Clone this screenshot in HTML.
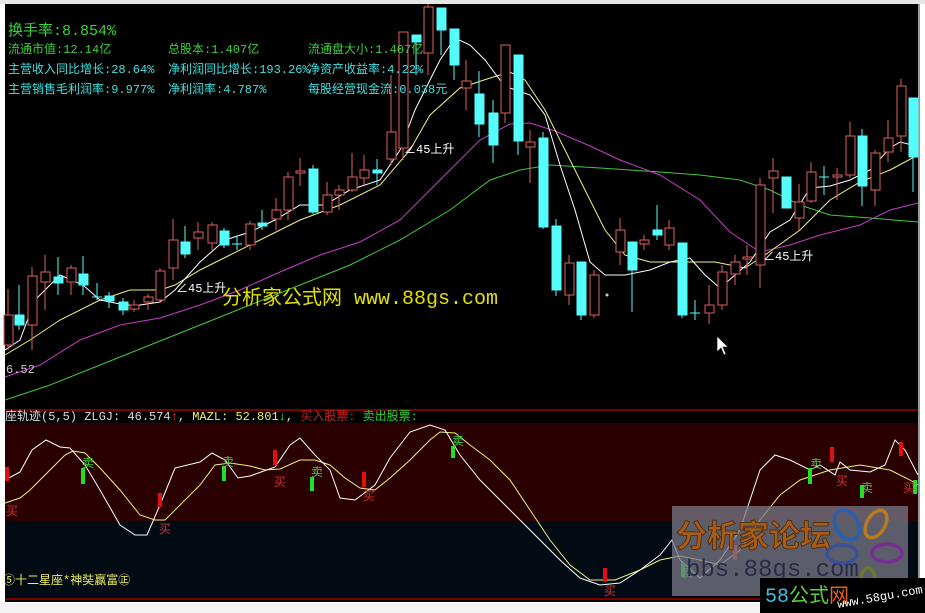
<!DOCTYPE html>
<html><head><meta charset="utf-8"><style>
html,body{margin:0;padding:0;background:#fff;width:925px;height:613px;overflow:hidden}
svg{display:block}
text{font-family:"Liberation Mono","Noto Sans CJK SC",monospace}
</style></head><body>
<svg width="925" height="613" viewBox="0 0 925 613" xmlns="http://www.w3.org/2000/svg">
<rect x="0" y="0" width="925" height="613" fill="#fff"/>
<rect x="0" y="0" width="925" height="4" fill="#e6e6e6"/>
<rect x="5" y="4" width="913" height="598" fill="#000"/>
<rect x="918" y="4" width="2" height="600" fill="#9a9a9a"/>
<rect x="5" y="423" width="913" height="98" fill="#2a0000"/>
<rect x="5" y="521" width="913" height="76" fill="#020a14"/>
<line x1="5" y1="410" x2="918" y2="410" stroke="#a00000" stroke-width="1.5"/>
<line x1="5" y1="599" x2="918" y2="599" stroke="#a00000" stroke-width="1.5"/>
<rect x="0" y="603" width="925" height="10" fill="#f4f4f4"/>

<polyline fill="none" stroke="#3fc83f" stroke-width="1" points="5,400 50,385 100,365 150,345 200,325 250,305 300,285 350,265 400,240 450,210 490,180 520,170 550,165 600,168 660,172 700,175 740,180 770,190 800,205 830,215 870,218 918,222"/>
<polyline fill="none" stroke="#c83cc8" stroke-width="1" points="5,377 40,365 80,340 120,325 160,318 200,305 240,290 280,272 320,255 360,242 400,220 440,180 480,140 510,124 530,123 555,131 590,146 620,160 660,175 700,200 730,232 760,252 790,245 820,235 860,225 890,210 918,203"/>
<polyline fill="none" stroke="#f0f080" stroke-width="1" points="5,355 30,340 60,320 100,300 130,290 160,290 175,285 200,270 230,255 260,240 300,220 340,205 380,185 410,150 430,115 460,88 490,78 510,72 525,80 545,110 565,150 585,190 605,230 625,255 650,262 680,262 715,262 745,268 765,255 800,230 830,200 860,182 890,170 918,155"/>
<polyline fill="none" stroke="#ffffff" stroke-width="1" points="5,350 20,340 35,300 60,275 83,285 100,300 125,305 140,305 160,302 175,290 200,262 225,240 250,232 275,220 300,205 325,205 350,190 380,180 400,150 415,110 440,60 455,38 470,45 485,60 500,80 510,88 530,95 545,115 560,165 575,210 590,262 605,275 625,275 650,270 670,262 690,258 705,275 720,288 735,275 750,262 770,232 790,220 810,188 830,186 850,180 870,170 890,148 900,142 912,145 918,140"/>

<g stroke="#e06060" fill="none" stroke-width="1">
<line x1="8" y1="289" x2="8" y2="350"/><rect x="4" y="315" width="9" height="30" fill="#000"/>
<line x1="32" y1="267" x2="32" y2="350"/><rect x="28" y="276" width="9" height="49" fill="#000"/>
<line x1="45" y1="255" x2="45" y2="310"/><rect x="41" y="272" width="9" height="10" fill="#000"/>
<line x1="71" y1="265" x2="71" y2="295"/><rect x="67" y="268" width="9" height="14" fill="#000"/>
<line x1="134" y1="300" x2="134" y2="312"/><rect x="130" y="305" width="9" height="4" fill="#000"/>
<line x1="148" y1="294" x2="148" y2="310"/><rect x="144" y="297" width="9" height="5" fill="#000"/>
<line x1="160" y1="268" x2="160" y2="303"/><rect x="156" y="271" width="9" height="29" fill="#000"/>
<line x1="173" y1="219" x2="173" y2="280"/><rect x="169" y="240" width="9" height="28" fill="#000"/>
<line x1="198" y1="222" x2="198" y2="250"/><rect x="194" y="232" width="9" height="6" fill="#000"/>
<line x1="212" y1="222" x2="212" y2="250"/><rect x="208" y="225" width="9" height="18" fill="#000"/>
<line x1="250" y1="221" x2="250" y2="250"/><rect x="246" y="224" width="9" height="21" fill="#000"/>
<line x1="276" y1="198" x2="276" y2="230"/><rect x="272" y="210" width="9" height="9" fill="#000"/>
<line x1="288" y1="172" x2="288" y2="220"/><rect x="284" y="177" width="9" height="33" fill="#000"/>
<line x1="300" y1="158" x2="300" y2="186"/><rect x="296" y="171" width="9" height="2" fill="#000"/>
<line x1="327" y1="182" x2="327" y2="215"/><rect x="323" y="195" width="9" height="17" fill="#000"/>
<line x1="339" y1="185" x2="339" y2="210"/><rect x="335" y="190" width="9" height="5" fill="#000"/>
<line x1="352" y1="153" x2="352" y2="192"/><rect x="348" y="177" width="9" height="13" fill="#000"/>
<line x1="364" y1="155" x2="364" y2="185"/><rect x="360" y="170" width="9" height="8" fill="#000"/>
<line x1="391" y1="75" x2="391" y2="165"/><rect x="387" y="132" width="9" height="27" fill="#000"/>
<line x1="403" y1="32" x2="403" y2="160"/><rect x="399" y="32" width="9" height="116" fill="#000"/>
<line x1="428" y1="4" x2="428" y2="75"/><rect x="424" y="7" width="9" height="46" fill="#000"/>
<line x1="466" y1="60" x2="466" y2="110"/><rect x="462" y="81" width="9" height="7" fill="#000"/>
<line x1="505" y1="45" x2="505" y2="123"/><rect x="501" y="45" width="9" height="68" fill="#000"/>
<line x1="530" y1="130" x2="530" y2="183"/><rect x="526" y="142" width="9" height="5" fill="#000"/>
<line x1="569" y1="255" x2="569" y2="305"/><rect x="565" y="263" width="9" height="32" fill="#000"/>
<line x1="594" y1="270" x2="594" y2="318"/><rect x="590" y="275" width="9" height="40" fill="#000"/>
<line x1="620" y1="218" x2="620" y2="265"/><rect x="616" y="230" width="9" height="22" fill="#000"/>
<line x1="644" y1="235" x2="644" y2="250"/><rect x="640" y="240" width="9" height="4" fill="#000"/>
<line x1="669" y1="220" x2="669" y2="250"/><rect x="665" y="228" width="9" height="17" fill="#000"/>
<line x1="709" y1="285" x2="709" y2="324"/><rect x="705" y="305" width="9" height="8" fill="#000"/>
<line x1="722" y1="265" x2="722" y2="310"/><rect x="718" y="272" width="9" height="33" fill="#000"/>
<line x1="735" y1="255" x2="735" y2="285"/><rect x="731" y="262" width="9" height="12" fill="#000"/>
<line x1="747" y1="245" x2="747" y2="275"/><rect x="743" y="257" width="9" height="2" fill="#000"/>
<line x1="760" y1="178" x2="760" y2="288"/><rect x="756" y="185" width="9" height="80" fill="#000"/>
<line x1="773" y1="158" x2="773" y2="213"/><rect x="769" y="171" width="9" height="7" fill="#000"/>
<line x1="799" y1="184" x2="799" y2="230"/><rect x="795" y="202" width="9" height="16" fill="#000"/>
<line x1="811" y1="162" x2="811" y2="203"/><rect x="807" y="172" width="9" height="29" fill="#000"/>
<line x1="837" y1="168" x2="837" y2="200"/><rect x="833" y="175" width="9" height="2" fill="#000"/>
<line x1="850" y1="122" x2="850" y2="178"/><rect x="846" y="136" width="9" height="39" fill="#000"/>
<line x1="875" y1="150" x2="875" y2="206"/><rect x="871" y="153" width="9" height="37" fill="#000"/>
<line x1="888" y1="120" x2="888" y2="162"/><rect x="884" y="138" width="9" height="14" fill="#000"/>
<line x1="901" y1="79" x2="901" y2="152"/><rect x="897" y="86" width="9" height="50" fill="#000"/>
</g>
<g stroke="#54fcfc" fill="#54fcfc" stroke-width="1">
<line x1="19" y1="285" x2="19" y2="330"/><rect x="15" y="315" width="9" height="10"/>
<line x1="58" y1="257" x2="58" y2="295"/><rect x="54" y="277" width="9" height="6"/>
<line x1="83" y1="256" x2="83" y2="295"/><rect x="79" y="274" width="9" height="11"/>
<line x1="97" y1="283" x2="97" y2="300"/><line x1="92" y1="297" x2="102" y2="297"/>
<line x1="109" y1="292" x2="109" y2="308"/><rect x="105" y="296" width="9" height="5"/>
<line x1="123" y1="298" x2="123" y2="315"/><rect x="119" y="302" width="9" height="8"/>
<line x1="185" y1="226" x2="185" y2="258"/><rect x="181" y="242" width="9" height="12"/>
<line x1="224" y1="228" x2="224" y2="248"/><rect x="220" y="231" width="9" height="14"/>
<line x1="237" y1="236" x2="237" y2="250"/><line x1="232" y1="244" x2="242" y2="244"/>
<line x1="262" y1="210" x2="262" y2="230"/><rect x="258" y="223" width="9" height="3"/>
<line x1="313" y1="165" x2="313" y2="214"/><rect x="309" y="169" width="9" height="43"/>
<line x1="377" y1="159" x2="377" y2="185"/><rect x="373" y="170" width="9" height="3"/>
<line x1="416" y1="35" x2="416" y2="75"/><rect x="412" y="35" width="9" height="7"/>
<line x1="441" y1="8" x2="441" y2="55"/><rect x="437" y="8" width="9" height="22"/>
<line x1="454" y1="29" x2="454" y2="80"/><rect x="450" y="29" width="9" height="36"/>
<line x1="479" y1="71" x2="479" y2="137"/><rect x="475" y="94" width="9" height="30"/>
<line x1="493" y1="100" x2="493" y2="163"/><rect x="489" y="113" width="9" height="32"/>
<line x1="518" y1="55" x2="518" y2="155"/><rect x="514" y="55" width="9" height="86"/>
<line x1="543" y1="132" x2="543" y2="229"/><rect x="539" y="138" width="9" height="89"/>
<line x1="556" y1="219" x2="556" y2="296"/><rect x="552" y="226" width="9" height="64"/>
<line x1="581" y1="262" x2="581" y2="320"/><rect x="577" y="262" width="9" height="53"/>
<line x1="632" y1="242" x2="632" y2="312"/><rect x="628" y="242" width="9" height="28"/>
<line x1="657" y1="205" x2="657" y2="240"/><rect x="653" y="230" width="9" height="5"/>
<line x1="682" y1="243" x2="682" y2="318"/><rect x="678" y="243" width="9" height="72"/>
<line x1="695" y1="300" x2="695" y2="320"/><line x1="690" y1="313" x2="700" y2="313"/>
<line x1="786" y1="177" x2="786" y2="208"/><rect x="782" y="177" width="9" height="31"/>
<line x1="824" y1="166" x2="824" y2="195"/><line x1="819" y1="177" x2="829" y2="177"/>
<line x1="862" y1="129" x2="862" y2="206"/><rect x="858" y="136" width="9" height="50"/>
<line x1="913" y1="98" x2="913" y2="192"/><rect x="909" y="98" width="9" height="59"/>
</g>
<circle cx="607" cy="295" r="1.5" fill="#ccc"/>

<text x="8" y="35" font-size="15" fill="#3cd03c">换手率:8.854%</text>
<g font-size="12">
<text x="8" y="53" fill="#3cd03c">流通市值:12.14亿</text>
<text x="168" y="53" fill="#3cd03c">总股本:1.407亿</text>
<text x="308" y="53" fill="#3cd03c">流通盘大小:1.407亿</text>
<text x="8" y="73" fill="#40e0e0">主营收入同比增长:28.64%</text>
<text x="168" y="73" fill="#40e0e0">净利润同比增长:193.26%</text>
<text x="308" y="73" fill="#40e0e0">净资产收益率:4.22%</text>
<text x="8" y="93" fill="#40e0e0">主营销售毛利润率:9.977%</text>
<text x="168" y="93" fill="#40e0e0">净利润率:4.787%</text>
<text x="308" y="93" fill="#40e0e0">每股经营现金流:0.038元</text>
</g>
<g font-size="12" fill="#fff">
<text x="404" y="153">∠45上升</text>
<text x="176" y="292">∠45上升</text>
<text x="763" y="260">∠45上升</text>
<text x="6" y="373" fill="#ccc">6.52</text>
</g>
<text x="222" y="304" font-size="20" fill="#e0e000">分析家公式网 www.88gs.com</text>
<path d="M717,336 L717,352 L721,348 L724,355 L726,354 L723,347 L728,347 Z" fill="#fff" stroke="#000" stroke-width="0.6"/>

<text x="5" y="420" font-size="12" fill="#ddd">座轨迹(5,5) ZLGJ: 46.574<tspan fill="#ff4040">↑</tspan>, <tspan fill="#f0f060">MAZL: 52.801</tspan><tspan fill="#40ff40">↓</tspan>, <tspan fill="#d02020">买入股票:</tspan> <tspan fill="#30d030">卖出股票:</tspan></text>

<polyline fill="none" stroke="#f0f080" stroke-width="1" points="5,503 20,498 30,490 50,470 65,455 73,451 85,453 100,468 120,490 140,515 155,520 165,520 180,505 200,485 215,465 230,463 250,466 265,470 280,469 300,460 315,460 330,465 345,478 360,488 375,490 390,478 410,460 430,440 440,432 455,433 470,445 490,460 510,480 530,510 550,540 570,565 590,580 615,580 640,570 660,560 680,556 700,560 720,565 740,550 760,520 780,495 800,480 830,470 860,465 890,470 910,480 918,485"/>
<polyline fill="none" stroke="#fff" stroke-width="1" points="5,480 20,472 32,450 46,440 60,447 70,448 85,465 100,490 120,525 135,535 147,535 160,505 175,468 200,462 212,453 225,460 238,478 250,476 275,467 290,445 300,438 315,455 330,470 340,498 355,500 375,485 390,458 410,432 430,425 445,430 460,455 480,480 500,500 520,520 540,540 560,560 580,578 600,585 620,583 640,570 660,555 672,540 680,560 700,578 720,560 740,530 760,470 775,455 790,460 810,470 820,465 835,475 840,462 850,470 870,472 885,465 895,440 905,450 918,475"/>
<g fill="#e01010">
<rect x="5" y="467" width="4" height="14"/><rect x="158" y="493" width="4" height="14"/><rect x="273" y="450" width="4" height="15"/><rect x="362" y="472" width="4" height="15"/><rect x="603" y="568" width="4" height="14"/><rect x="733" y="545" width="4" height="15"/><rect x="830" y="447" width="4" height="15"/><rect x="899" y="442" width="4" height="14"/>
</g>
<g fill="#20e020">
<rect x="81" y="468" width="4" height="16"/><rect x="222" y="466" width="4" height="15"/><rect x="310" y="477" width="4" height="14"/><rect x="451" y="446" width="4" height="12"/><rect x="681" y="563" width="4" height="14"/><rect x="808" y="468" width="4" height="16"/><rect x="860" y="485" width="4" height="13"/><rect x="913" y="480" width="4" height="14"/>
</g>
<g font-size="12" fill="#d03030">
<text x="6" y="515">买</text><text x="159" y="533">买</text><text x="274" y="486">买</text><text x="363" y="500">买</text><text x="604" y="595">买</text><text x="836" y="485">买</text><text x="903" y="492">买</text>
</g>
<g font-size="12" fill="#40d040">
<text x="82" y="467">卖</text><text x="222" y="466">卖</text><text x="311" y="476">卖</text><text x="452" y="445">卖</text><text x="682" y="577">卖</text><text x="810" y="468">卖</text><text x="861" y="492">卖</text>
</g>
<text x="3" y="584" font-size="12" fill="#f0f060">⑤十二星座*神奘赢富㊣</text>

<rect x="672" y="506" width="236" height="90" fill="#7a7a88" opacity="0.75"/>
<text x="676" y="547" font-size="31" font-weight="bold" fill="#a85c18" stroke="#4a2806" stroke-width="0.8" font-family="'Noto Sans CJK SC',sans-serif">分析家论坛</text>
<text x="686" y="576" font-size="24" fill="#2a2a48" font-family="'Liberation Sans',sans-serif">bbs.88gs.com</text>
<g fill="none" stroke-width="3.5" opacity="0.8">
<ellipse cx="847" cy="525" rx="11" ry="16" transform="rotate(-30 847 525)" stroke="#2060c0"/>
<ellipse cx="876" cy="524" rx="9" ry="15" transform="rotate(30 876 524)" stroke="#d08010"/>
<ellipse cx="887" cy="553" rx="15" ry="9" stroke="#8020a0"/>
<ellipse cx="842" cy="554" rx="15" ry="9" stroke="#3050a0"/>
<ellipse cx="868" cy="580" rx="7" ry="12" stroke="#708020"/>
</g>
<rect x="760" y="578" width="165" height="35" fill="#000"/>
<text x="765" y="602" font-size="20" fill="#40c0e0" font-family="'Liberation Sans','Noto Sans CJK SC',sans-serif">58<tspan fill="#60d040">公式</tspan><tspan fill="#e06020">网</tspan></text>
<text x="838" y="608" font-size="12" fill="#fff" transform="rotate(-10 838 608)" font-family="'Liberation Sans',sans-serif">www.58gu.com</text>
</svg>
</body></html>
